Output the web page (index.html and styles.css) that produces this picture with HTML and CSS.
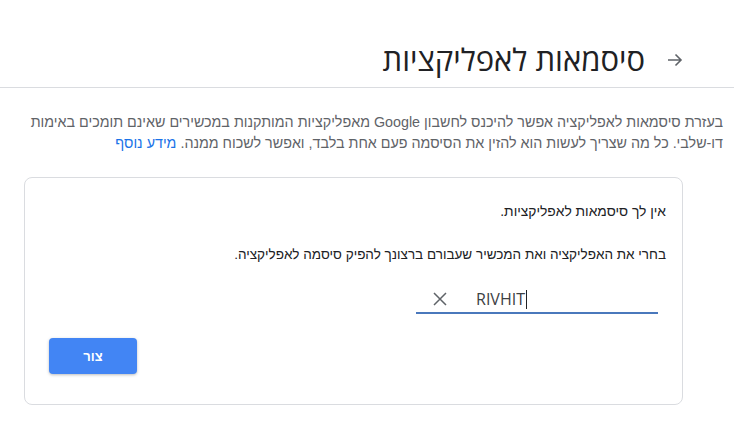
FILE: index.html
```html
<!DOCTYPE html>
<html lang="he" dir="rtl">
<head>
<meta charset="utf-8">
<link rel="stylesheet" href="styles.css">
</head>
<body>
<header class="header">
  <svg class="back" width="16" height="16" viewBox="0 0 16 16"><path d="M1 8h13M8.5 2.5L14 8l-5.5 5.5" fill="none" stroke="#5f6368" stroke-width="1.6"/></svg>
  <h1 class="title">סיסמאות לאפליקציות</h1>
</header>
<p class="intro">בעזרת סיסמאות לאפליקציה אפשר להיכנס לחשבון Google מאפליקציות המותקנות במכשירים שאינם תומכים באימות דו-שלבי. כל מה שצריך לעשות הוא להזין את הסיסמה פעם אחת בלבד, ואפשר לשכוח ממנה. <a class="link" href="#">מידע נוסף</a></p>
<section class="card">
  <p class="msg">אין לך סיסמאות לאפליקציות.</p>
  <p class="msg msg2">בחרי את האפליקציה ואת המכשיר שעבורם ברצונך להפיק סיסמה לאפליקציה.</p>
  <div class="field">
    <span class="value">RIVHIT<span class="caret"></span></span>
    <svg class="clear" width="14" height="14" viewBox="0 0 14 14"><path d="M1 1l12 12M13 1L1 13" stroke="#5f6368" stroke-width="1.5"/></svg>
  </div>
  <button class="btn">צור</button>
</section>
</body>
</html>
```
FILE: styles.css
```css
body {
  margin: 0;
  background: #fff;
  font-family: "Liberation Sans", Arial, sans-serif;
  color: #202124;
}
.header {
  height: 88px;
  box-sizing: border-box;
  border-bottom: 1px solid #dadce0;
  display: flex;
  align-items: center;
  gap: 22px;
  padding: 30px 51px 0 0;
}
.back { flex: none; margin-top: 2px; }
.title {
  margin: 0;
  font-family: "Open Sans", "Liberation Sans", sans-serif;
  font-weight: 400;
  font-size: 31px;
  line-height: 38px;
  color: #202124;
}
.intro {
  margin: 24px 11px 0 8px;
  font-size: 14.3px;
  line-height: 21px;
  color: #5f6368;
}
.link { color: #1a73e8; text-decoration: none; }
.card {
  margin: 23px 51px 0 24px;
  border: 1px solid #dadce0;
  border-radius: 8px;
  padding: 24px 16px 30px 24px;
  display: flex;
  flex-direction: column;
}
.msg {
  margin: 0;
  font-size: 13.8px;
  line-height: 20px;
  color: #202124;
}
.msg2 { margin-top: 23px; font-size: 13.5px; }
.field {
  margin: 18px 8px 0 0;
  width: 242px;
  height: 31px;
  box-sizing: border-box;
  border-bottom: 2px solid #4a78bc;
  display: flex;
  direction: ltr;
  align-items: center;
  padding: 3px 0 0 17px;
  flex-direction: row-reverse;
  justify-content: flex-end;
  gap: 29px;
  align-self: flex-start;
}
.value {
  font-family: "Open Sans", "Liberation Sans", sans-serif;
  font-size: 16px;
  color: #3c4043;
  display: flex;
  align-items: center;
}
.caret {
  width: 1px;
  height: 19px;
  background: #202124;
  margin-left: 1px;
}
.clear { flex: none; }
.btn {
  align-self: flex-end;
  margin-top: 24px;
  width: 88px;
  height: 36px;
  border: none;
  border-radius: 4px;
  background: #4285f4;
  color: #fff;
  font-family: "Liberation Sans", Arial, sans-serif;
  font-size: 13px;
  font-weight: 700;
  box-shadow: 0 1px 3px rgba(60,64,67,0.35);
}
```
